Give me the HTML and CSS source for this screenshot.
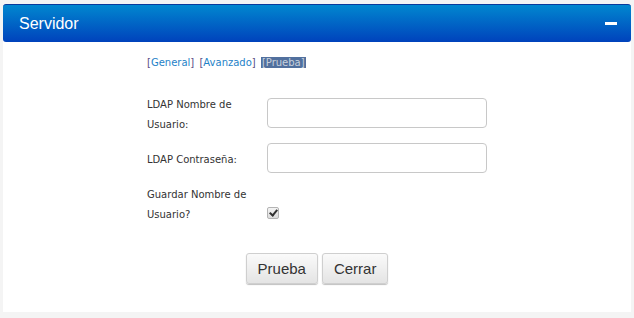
FILE: index.html
```html
<!DOCTYPE html>
<html lang="es">
<head>
  <meta charset="utf-8">
  <title>Servidor</title>
  <link rel="stylesheet" href="styles.css">
</head>
<body>
  <div class="panel">
    <div class="panel-head">
      <span class="panel-title">Servidor</span>
      <span class="collapse"></span>
    </div>
    <div class="panel-body">
      <div class="tabs">
        <a class="tab"><span class="br">[</span>General<span class="br">]</span></a>
        <a class="tab"><span class="br">[</span>Avanzado<span class="br">]</span></a>
        <a class="tab active">[Prueba]</a>
      </div>
      <div class="form">
        <div class="row">
          <label class="label">LDAP Nombre de Usuario:</label>
          <input type="text" class="field">
        </div>
        <div class="row">
          <label class="label">LDAP Contraseña:</label>
          <input type="password" class="field">
        </div>
        <div class="row">
          <label class="label">Guardar Nombre de Usuario?</label>
          <input type="checkbox" class="check" checked>
        </div>
      </div>
      <div class="buttons">
        <button class="btn">Prueba</button>
        <button class="btn">Cerrar</button>
      </div>
    </div>
  </div>
</body>
</html>
```
FILE: styles.css
```css
body {
  margin: 0;
  background: #f4f4f4;
  font-family: "DejaVu Sans", Verdana, sans-serif;
}

.panel {
  margin: 4px 3px 6px 3px;
  background: #fff;
}

.panel-head {
  box-sizing: border-box;
  height: 38px;
  padding: 0 14px 0 16px;
  display: flex;
  align-items: center;
  justify-content: space-between;
  background: linear-gradient(#0187cf, #0042bc);
  border-top: 1px solid #0a3a9c;
  border-radius: 3px;
  color: #fff;
}

.panel-title {
  font-family: "Liberation Sans", Arial, sans-serif;
  font-size: 16px;
}

.collapse {
  width: 12px;
  height: 3px;
  background: #fff;
}

.panel-body {
  padding: 14px 0 28px 144px;
}

.tabs {
  font-size: 10px;
  line-height: 14px;
  margin-bottom: 19px;
}

.tab {
  color: #1e82c8;
  margin-right: 2px;
}

.tab .br {
  color: #5a4f86;
}

.tab.active {
  background: #51709e;
  color: #c8d0dc;
  padding: 0 1px;
}

.row {
  display: flex;
  align-items: center;
  padding: 4px 0;
}

.label {
  width: 110px;
  margin: 0 10px -2px 0;
  padding-top: 2px;
  font-size: 10px;
  line-height: 20px;
  color: #333;
}

.field {
  box-sizing: border-box;
  width: 220px;
  height: 30px;
  margin: 2px 0;
  border: 1px solid #c8c8c8;
  border-radius: 4px;
}

.check {
  appearance: none;
  position: relative;
  align-self: flex-end;
  box-sizing: border-box;
  width: 12px;
  height: 12px;
  margin: 0 0 4px 0;
  border: 1px solid #b4b4b4;
  border-radius: 2px;
  background: linear-gradient(#f4f4f4, #dcdcdc);
}

.check:checked::after {
  content: "";
  position: absolute;
  left: 3px;
  top: 0;
  width: 3px;
  height: 6px;
  border: solid #333;
  border-width: 0 2px 2px 0;
  transform: rotate(40deg);
}

.buttons {
  display: flex;
  justify-content: center;
  gap: 4px;
  margin: 26px 0 0 -144px;
}

.btn {
  box-sizing: border-box;
  height: 31px;
  padding: 0 11px;
  font-family: "Liberation Sans", Arial, sans-serif;
  font-size: 15px;
  color: #333;
  background: linear-gradient(#fafafa, #e4e4e4);
  border: 1px solid #cfcfcf;
  border-radius: 3px;
  box-shadow: 0 1px 1px rgba(0, 0, 0, 0.25);
}
```
